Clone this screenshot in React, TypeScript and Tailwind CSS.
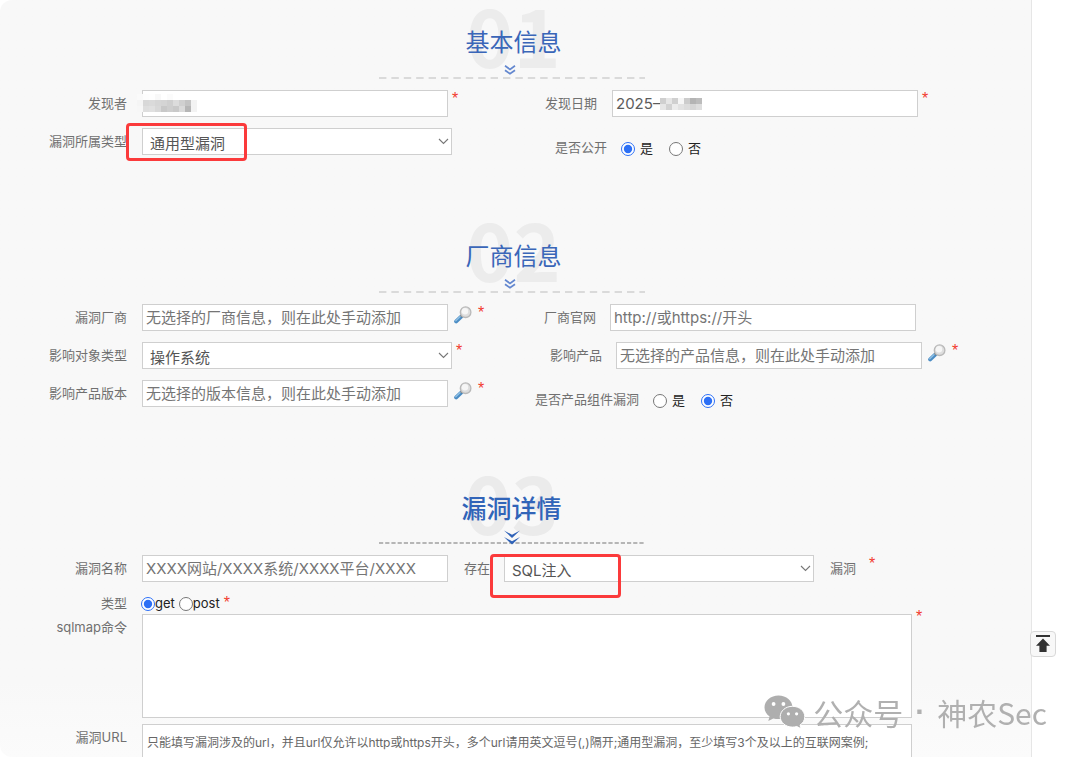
import { ReactNode } from 'react'

function Star({ className = '' }: { className?: string }) {
  return (
    <span className={`font-['Liberation_Sans',sans-serif] text-base leading-[18px] text-[#f23c2e] ${className}`}>*</span>
  )
}

function Label({ htmlFor, className = 'w-[127px]', children }: { htmlFor?: string; className?: string; children: ReactNode }) {
  return (
    <label htmlFor={htmlFor} className={`shrink-0 text-right text-[13px] leading-[27px] text-[#707070] ${className}`}>
      {children}
    </label>
  )
}

function TextInput({ id, placeholder, value }: { id: string; placeholder?: string; value?: string }) {
  return (
    <input
      id={id}
      type="text"
      placeholder={placeholder}
      defaultValue={value}
      className="block h-[27px] w-[306px] shrink-0 border border-[#cfcfcf] bg-white px-[3px] text-[15px] text-[#5c5c5c] placeholder:text-[#757575]"
    />
  )
}

function Select({ id, value, children }: { id: string; value: string; children?: ReactNode }) {
  return (
    <div className="relative w-[310px] shrink-0">
      <select
        id={id}
        className="block h-[27px] w-full appearance-none border border-[#cfcfcf] bg-white pt-1 pl-[7px] text-[15px] leading-5 text-[#555]"
      >
        <option>{value}</option>
      </select>
      <svg className="pointer-events-none absolute top-2 right-[3px] h-[10px] w-[11px]" viewBox="0 0 11 10" fill="none">
        <path d="M1 3l4.5 4.5L10 3" stroke="#777" strokeWidth="1.1" />
      </svg>
      {children}
    </div>
  )
}

function Radio({ name, label, checked }: { name: string; label: string; checked?: boolean }) {
  return (
    <label className="flex items-center gap-[5px] text-[13px] leading-[26px] text-[#222]">
      <input type="radio" name={name} defaultChecked={checked} className="mt-0.5 h-[14px] w-[14px] accent-[#2c6ff5]" />
      {label}
    </label>
  )
}

function SearchButton({ label }: { label: string }) {
  return (
    <button type="button" aria-label={label} className="mt-0.5 ml-1.5 h-[18px] w-[18px] shrink-0">
      <svg viewBox="0 0 18 18" className="h-full w-full" fill="none">
        <path d="M7.2 10.6L2.2 15.4" stroke="#4a8cc4" strokeWidth="4" strokeLinecap="round" />
        <path d="M6.2 10.6L1.8 14.8" stroke="#8fc0e4" strokeWidth="1.4" strokeLinecap="round" />
        <path d="M8.2 9.4L7 10.6" stroke="#666" strokeWidth="2.4" />
        <circle cx="11.6" cy="6.2" r="5.3" fill="#dedede" stroke="#b9b9b9" strokeWidth="1.3" />
        <circle cx="11" cy="5.2" r="3.2" fill="#f6f6f6" />
      </svg>
    </button>
  )
}

function Row({ left, right }: { left: ReactNode; right: ReactNode }) {
  return (
    <div className="flex items-start">
      <div className="flex w-[484px] shrink-0 items-start">{left}</div>
      <div className="flex items-start">{right}</div>
    </div>
  )
}

function SectionHeader({ number, title }: { number: string; title: string }) {
  return (
    <header className="relative flex h-[90px] flex-col items-center pt-[31px] pr-2">
      <span className="absolute -top-[5px] left-1/2 -translate-x-1/2 pr-1 font-['Noto_Sans_CJK_SC',sans-serif] text-[80px] leading-[76px] font-bold text-[#ececec]">
        {number}
      </span>
      <h2 className="relative pl-1 text-2xl leading-6 text-[#3a66b8]">{title}</h2>
      <svg className="relative mt-[10px] mr-[3px] h-[10px] w-[12px]" viewBox="0 0 12 10" fill="none">
        <path d="M1 .8l5 3.6 5-3.6M1 5.2l5 3.6 5-3.6" stroke="#6387cf" strokeWidth="1.7" />
      </svg>
      <svg className="mt-[2px] h-[2px] w-[266px]">
        <path d="M0 1h266" stroke="#cfcfcf" strokeWidth="1.4" strokeDasharray="7.4 5" />
      </svg>
    </header>
  )
}

function DetailHeader({ number, title }: { number: string; title: string }) {
  return (
    <header className="relative flex h-[90px] flex-col items-center pt-8 pr-2">
      <span className="absolute -top-[3px] left-1/2 -translate-x-1/2 pr-2 font-['Noto_Sans_CJK_SC',sans-serif] text-[80px] leading-[76px] font-bold text-[#ebebeb]">
        {number}
      </span>
      <h2 className="relative text-[25px] leading-6 font-medium text-[#3164b8]">{title}</h2>
      <svg className="relative mt-[9px] h-[15px] w-[16px]" viewBox="0 0 16 15">
        <path d="M0 .5l8 4.2 8-4.2-8 7.4zM0 7l8 4.2L16 7l-8 7.6z" fill="#2f62b8" />
      </svg>
      <svg className="-mt-[3px] h-[2px] w-[266px] shrink-0">
        <path d="M0 1h266" stroke="#a0a0a0" strokeWidth="1.4" strokeDasharray="4.2 2" />
      </svg>
    </header>
  )
}

function Mosaic({ shades, className }: { shades: string[][]; className: string }) {
  return (
    <svg
      className={`absolute ${className}`}
      width={shades[0].length * 6}
      height={shades.length * 6}
      shapeRendering="crispEdges"
      aria-hidden="true"
    >
      {shades.map((line, y) =>
        line.map((fill, x) => <rect key={`${x}-${y}`} x={x * 6} y={y * 6} width="6" height="6" fill={fill} />)
      )}
    </svg>
  )
}

const finderShades = [
  ['#fafafa', '#fdfdfd', '#fefefe', '#f8f8f8', '#fff', '#fbfbfb', '#fff', '#fff', '#fff', '#fff'],
  ['#f5f5f5', '#d8d8d8', '#dadada', '#d6d6d6', '#d4d4d4', '#cfcfcf', '#dcdcdc', '#d0d0d0', '#c4c4c4', '#f3f3f3'],
  ['#f7f7f7', '#dedede', '#e0e0e0', '#d8d8d8', '#c8c8c8', '#cecece', '#c9c9c9', '#dadada', '#b6b6b6', '#f3f3f3'],
]

const dateShades = [
  ['#cfcfcf', '#e6e6e6', '#d0d0d0', '#f6f6f6', '#cccccc', '#b4b4b4', '#bcbcbc'],
  ['#e6e6e6', '#d2d2d2', '#ececec', '#e2e2e2', '#dcdcdc', '#d6d6d6', '#dedede'],
]

function BasicInfo() {
  return (
    <section>
      <SectionHeader number="01" title="基本信息" />
      <div className="flex flex-col gap-[11px]">
        <Row
          left={
            <>
              <Label htmlFor="finder">发现者</Label>
              <div className="relative ml-[15px]">
                <TextInput id="finder" />
                <Mosaic shades={finderShades} className="top-1 -left-[5px]" />
              </div>
              <Star className="ml-1" />
            </>
          }
          right={
            <>
              <Label htmlFor="date" className="w-[113px]">发现日期</Label>
              <div className="relative ml-[15px]">
                <TextInput id="date" value="2025–" />
                <Mosaic shades={dateShades} className="top-2 left-[48px]" />
              </div>
              <Star className="ml-1" />
            </>
          }
        />
        <Row
          left={
            <>
              <Label htmlFor="kind">漏洞所属类型</Label>
              <div className="ml-[15px]">
                <Select id="kind" value="通用型漏洞">
                  <div className="pointer-events-none absolute -top-[5px] -left-4 h-[38px] w-[121px] rounded-sm border-3 border-[#fb3a3b]" />
                </Select>
              </div>
            </>
          }
          right={
            <div className="mt-1.5 flex">
              <Label className="w-[123px]">是否公开</Label>
              <div className="ml-[14px] flex gap-4">
                <Radio name="public" label="是" checked />
                <Radio name="public" label="否" />
              </div>
            </div>
          }
        />
      </div>
    </section>
  )
}

function VendorInfo() {
  return (
    <section className="mt-[53px]">
      <SectionHeader number="02" title="厂商信息" />
      <div className="flex flex-col gap-[11px]">
        <Row
          left={
            <>
              <Label htmlFor="vendor">漏洞厂商</Label>
              <div className="ml-[15px]">
                <TextInput id="vendor" placeholder="无选择的厂商信息，则在此处手动添加" />
              </div>
              <SearchButton label="选择厂商" />
              <Star className="ml-1.5" />
            </>
          }
          right={
            <>
              <Label htmlFor="site" className="w-[112px]">厂商官网</Label>
              <div className="ml-[14px]">
                <TextInput id="site" placeholder="http://或https://开头" />
              </div>
            </>
          }
        />
        <Row
          left={
            <>
              <Label htmlFor="target">影响对象类型</Label>
              <div className="ml-[15px]">
                <Select id="target" value="操作系统" />
              </div>
              <Star className="ml-1" />
            </>
          }
          right={
            <>
              <Label htmlFor="product" className="w-[118px]">影响产品</Label>
              <div className="ml-[14px]">
                <TextInput id="product" placeholder="无选择的产品信息，则在此处手动添加" />
              </div>
              <SearchButton label="选择产品" />
              <Star className="ml-1.5" />
            </>
          }
        />
        <Row
          left={
            <>
              <Label htmlFor="version">影响产品版本</Label>
              <div className="ml-[15px]">
                <TextInput id="version" placeholder="无选择的版本信息，则在此处手动添加" />
              </div>
              <SearchButton label="选择版本" />
              <Star className="ml-1.5" />
            </>
          }
          right={
            <div className="mt-1.5 flex">
              <Label className="w-[155px]">是否产品组件漏洞</Label>
              <div className="ml-[14px] flex gap-4">
                <Radio name="component" label="是" />
                <Radio name="component" label="否" checked />
              </div>
            </div>
          }
        />
      </div>
    </section>
  )
}

function VulnDetail() {
  return (
    <section className="mt-[52px]">
      <DetailHeader number="03" title="漏洞详情" />
      <div className="flex items-start">
        <Label htmlFor="name">漏洞名称</Label>
        <div className="ml-[15px]">
          <TextInput id="name" placeholder="XXXX网站/XXXX系统/XXXX平台/XXXX" />
        </div>
        <Label htmlFor="vuln" className="w-[42px]">存在</Label>
        <div className="ml-[14px]">
          <Select id="vuln" value="SQL注入">
            <div className="pointer-events-none absolute -top-px -left-[14px] h-[44px] w-[131px] rounded-sm border-3 border-[#fb3a3b]" />
          </Select>
        </div>
        <Label htmlFor="vuln" className="ml-4">漏洞</Label>
        <Star className="ml-[13px]" />
      </div>
      <div className="mt-[11px] flex h-5 items-center">
        <Label>类型</Label>
        <div className="ml-[14px] flex items-center gap-1">
          {['get', 'post'].map((method) => (
            <label key={method} className="flex items-center text-[13px] leading-5 text-[#222]">
              <input
                type="radio"
                name="method"
                defaultChecked={method === 'get'}
                className="mt-0.5 h-[14px] w-[14px] accent-[#2c6ff5]"
              />
              {method}
            </label>
          ))}
          <Star />
        </div>
      </div>
      <div className="mt-px flex items-start">
        <Label htmlFor="sqlmap">sqlmap命令</Label>
        <textarea
          id="sqlmap"
          className="ml-[15px] block h-[104px] w-[770px] resize-none border border-[#cfcfcf] bg-white"
        />
        <Star className="-mt-1.5 ml-1" />
      </div>
      <div className="mt-1.5 flex items-start">
        <Label htmlFor="url">漏洞URL</Label>
        <textarea
          id="url"
          placeholder="只能填写漏洞涉及的url，并且url仅允许以http或https开头，多个url请用英文逗号(,)隔开;通用型漏洞，至少填写3个及以上的互联网案例;"
          className="ml-[15px] block h-[104px] w-[770px] resize-none border border-[#cfcfcf] bg-white px-1 pt-2 text-xs leading-5 placeholder:text-[#666]"
        />
      </div>
    </section>
  )
}

function Watermark() {
  return (
    <div className="pointer-events-none fixed right-[33px] bottom-[27px] flex items-center gap-2 text-[#b0b0b0]">
      <svg className="h-[34px] w-[41px]" viewBox="0 0 41 34">
        <path
          d="M14.5.5C6.7.5.5 5.9.5 12.5c0 3.7 2 6.9 5.1 9.1L4.3 26l5-2.6c1.7.5 3.4.7 5.2.7 7.8 0 14-5.2 14-11.7S22.3.5 14.5.5z"
          fill="#aeaeae"
        />
        <circle cx="9.6" cy="9" r="1.9" fill="#fff" />
        <circle cx="19.4" cy="9" r="1.9" fill="#fff" />
        <path
          d="M28.5 11.3c-6.9 0-12.3 4.7-12.3 10.4s5.4 10.4 12.3 10.4c1.5 0 3-.2 4.3-.6l4.3 2.3-1.1-3.7c2.9-1.9 4.8-4.9 4.8-8.4 0-5.7-5.5-10.4-12.3-10.4z"
          fill="#aeaeae"
          stroke="#fff"
          strokeWidth="1"
        />
        <circle cx="24.4" cy="18.8" r="1.6" fill="#fff" />
        <circle cx="32.6" cy="18.8" r="1.6" fill="#fff" />
      </svg>
      <p className="flex gap-3 font-['Noto_Sans_CJK_SC',sans-serif] text-[30px] leading-9">
        <span>公众号</span>
        <span className="font-['Liberation_Sans',sans-serif] font-bold">·</span>
        <span>神农Sec</span>
      </p>
    </div>
  )
}

export default function App() {
  return (
    <div className="flex h-screen overflow-hidden bg-white font-['Inter','Noto_Sans_CJK_SC',sans-serif]">
      <main className="min-w-0 flex-1 rounded-l-xl border-r border-[#e6e6e6] bg-linear-to-b from-[#f8f8f8] from-90% to-[#fbfbfb]">
        <form>
          <BasicInfo />
          <VendorInfo />
          <VulnDetail />
        </form>
      </main>
      <aside className="w-12 shrink-0">
        <button
          type="button"
          aria-label="返回顶部"
          className="fixed right-6 bottom-[100px] flex h-[26px] w-[26px] items-center justify-center rounded-sm border border-[#d8d8d8] bg-[#f8f8f8]"
        >
          <svg className="h-[18px] w-[14px]" viewBox="0 0 14 18">
            <path d="M0 0h14v2H0zM7 3.5l7 7.2h-3.4V17H3.4v-6.3H0z" fill="#333" />
          </svg>
        </button>
      </aside>
      <Watermark />
    </div>
  )
}
